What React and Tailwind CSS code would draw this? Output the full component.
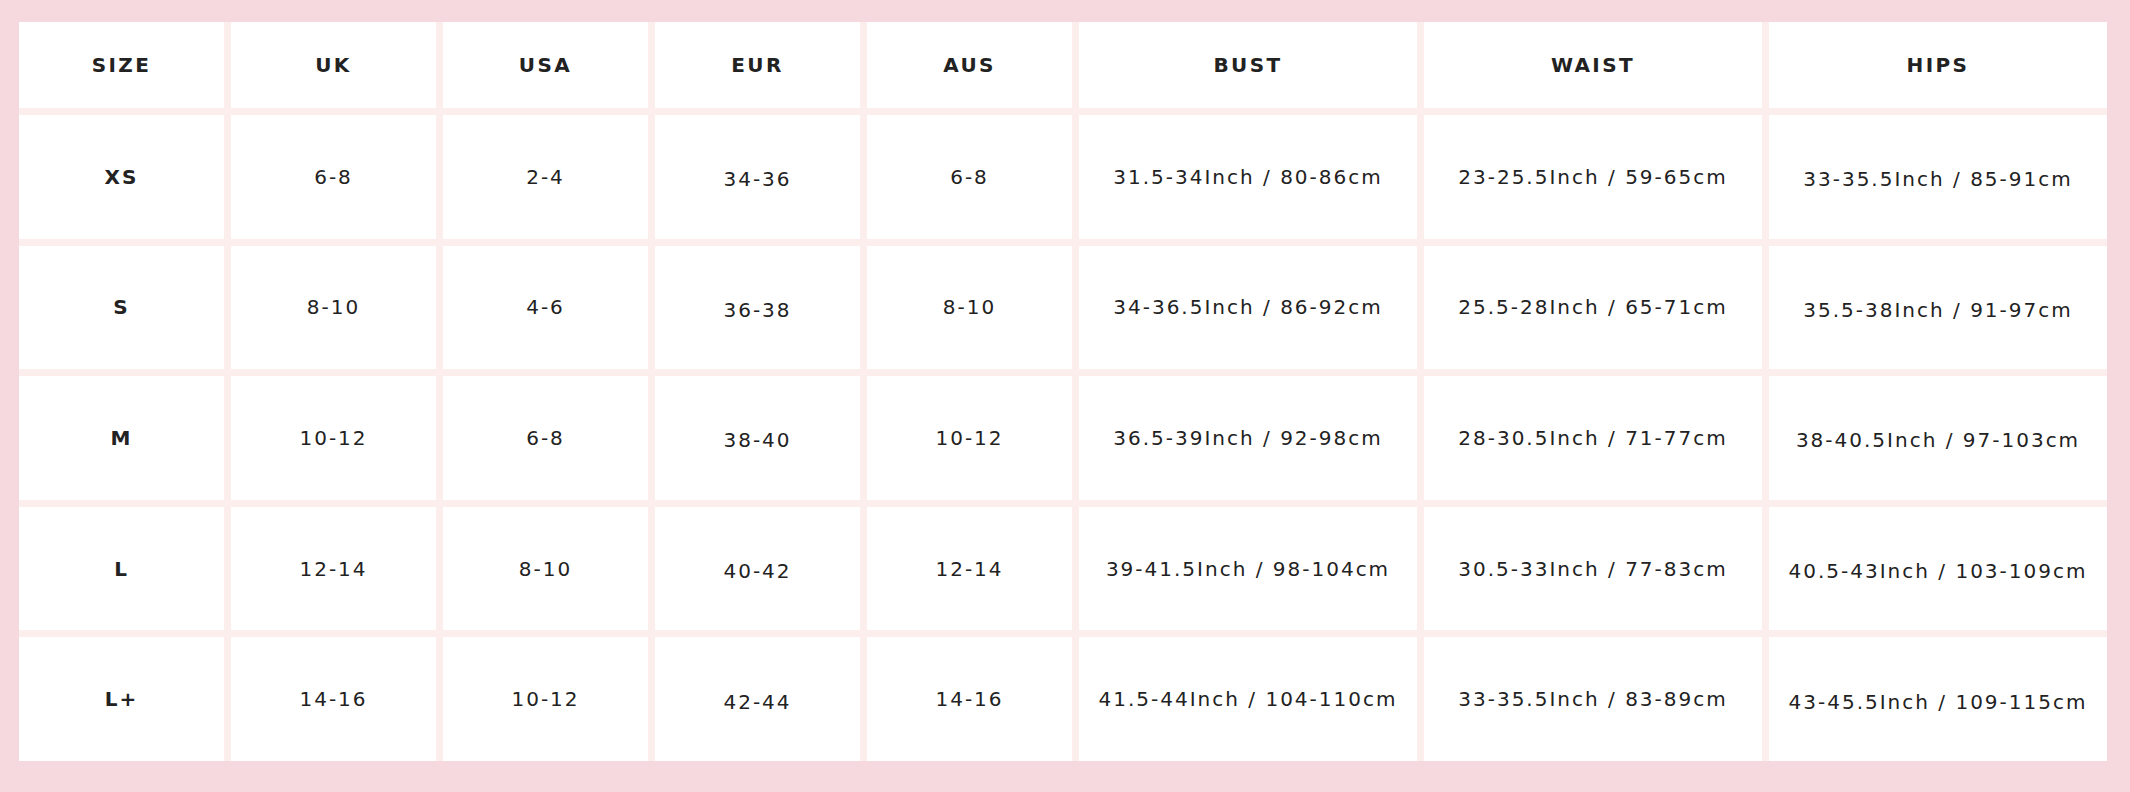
const headers = ["SIZE", "UK", "USA", "EUR", "AUS", "BUST", "WAIST", "HIPS"];

const rows = [
  ["XS", "6-8", "2-4", "34-36", "6-8", "31.5-34Inch / 80-86cm", "23-25.5Inch / 59-65cm", "33-35.5Inch / 85-91cm"],
  ["S", "8-10", "4-6", "36-38", "8-10", "34-36.5Inch / 86-92cm", "25.5-28Inch / 65-71cm", "35.5-38Inch / 91-97cm"],
  ["M", "10-12", "6-8", "38-40", "10-12", "36.5-39Inch / 92-98cm", "28-30.5Inch / 71-77cm", "38-40.5Inch / 97-103cm"],
  ["L", "12-14", "8-10", "40-42", "12-14", "39-41.5Inch / 98-104cm", "30.5-33Inch / 77-83cm", "40.5-43Inch / 103-109cm"],
  ["L+", "14-16", "10-12", "42-44", "14-16", "41.5-44Inch / 104-110cm", "33-35.5Inch / 83-89cm", "43-45.5Inch / 109-115cm"],
];

// EUR and HIPS values sit a touch lower in the original artwork
const lowered = [3, 7];

export default function App() {
  return (
    <div className="w-[2130px] h-[792px] bg-[#f6d9de] pt-[22px] pl-[19px] pr-[23px] pb-[31px] font-['DejaVu_Sans',sans-serif] text-[#222]">
      <div className="h-full grid grid-cols-[205px_205px_205px_205px_205px_1fr_1fr_1fr] grid-rows-[86px_repeat(5,1fr)] gap-[7px] bg-[#fdeeee]">
        {headers.map((h) => (
          <div key={h} className="bg-white flex items-center justify-center text-[20px] font-bold tracking-[0.12em]">
            {h}
          </div>
        ))}
        {rows.map((r) =>
          r.map((cell, i) => (
            <div
              key={r[0] + i}
              className={
                i === 0
                  ? "bg-white flex items-center justify-center text-[20px] font-bold tracking-[0.1em]"
                  : lowered.includes(i)
                  ? "bg-white flex items-center justify-center pt-[5px] text-[20px] tracking-[0.1em]"
                  : "bg-white flex items-center justify-center text-[20px] tracking-[0.1em]"
              }
            >
              {cell}
            </div>
          ))
        )}
      </div>
    </div>
  );
}
